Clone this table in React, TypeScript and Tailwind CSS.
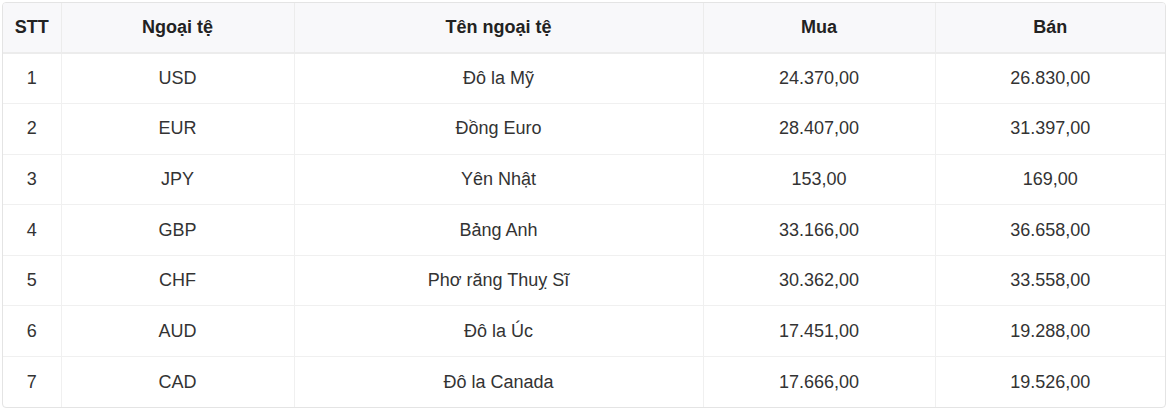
import React from "react";

const rows = [
  ["1", "USD", "Đô la Mỹ", "24.370,00", "26.830,00"],
  ["2", "EUR", "Đồng Euro", "28.407,00", "31.397,00"],
  ["3", "JPY", "Yên Nhật", "153,00", "169,00"],
  ["4", "GBP", "Bảng Anh", "33.166,00", "36.658,00"],
  ["5", "CHF", "Phơ răng Thuỵ Sĩ", "30.362,00", "33.558,00"],
  ["6", "AUD", "Đô la Úc", "17.451,00", "19.288,00"],
  ["7", "CAD", "Đô la Canada", "17.666,00", "19.526,00"],
];

export default function App() {
  return (
    <div className="w-[1170px] h-[410px] bg-white pt-[2px] pl-[2px]" style={{ fontFamily: '"Liberation Sans", Arial, sans-serif' }}>
      <div className="w-[1164px] border border-[#e4e4e4] rounded-[4px] overflow-hidden">
        <table className="w-full border-collapse table-fixed text-[18px]">
          <colgroup>
            <col className="w-[58px]" />
            <col className="w-[233px]" />
            <col className="w-[409px]" />
            <col className="w-[232px]" />
            <col />
          </colgroup>
          <thead>
            <tr className="bg-[#f8f8fa] h-[50px] border-b-2 border-[#ececec]">
              {["STT", "Ngoại tệ", "Tên ngoại tệ", "Mua", "Bán"].map((h, i) => (
                <th key={i} className={`font-bold text-[#222] text-center ${i > 0 ? "border-l border-[#ececec]" : ""}`}>
                  {h}
                </th>
              ))}
            </tr>
          </thead>
          <tbody>
            {rows.map((r, ri) => (
              <tr key={ri} className={`h-[50.6px] ${ri < rows.length - 1 ? "border-b border-[#f0f0f0]" : ""}`}>
                {r.map((c, ci) => (
                  <td key={ci} className={`text-center text-[#333] ${ci > 0 ? "border-l border-[#f0f0f0]" : ""}`}>
                    {c}
                  </td>
                ))}
              </tr>
            ))}
          </tbody>
        </table>
      </div>
    </div>
  );
}
